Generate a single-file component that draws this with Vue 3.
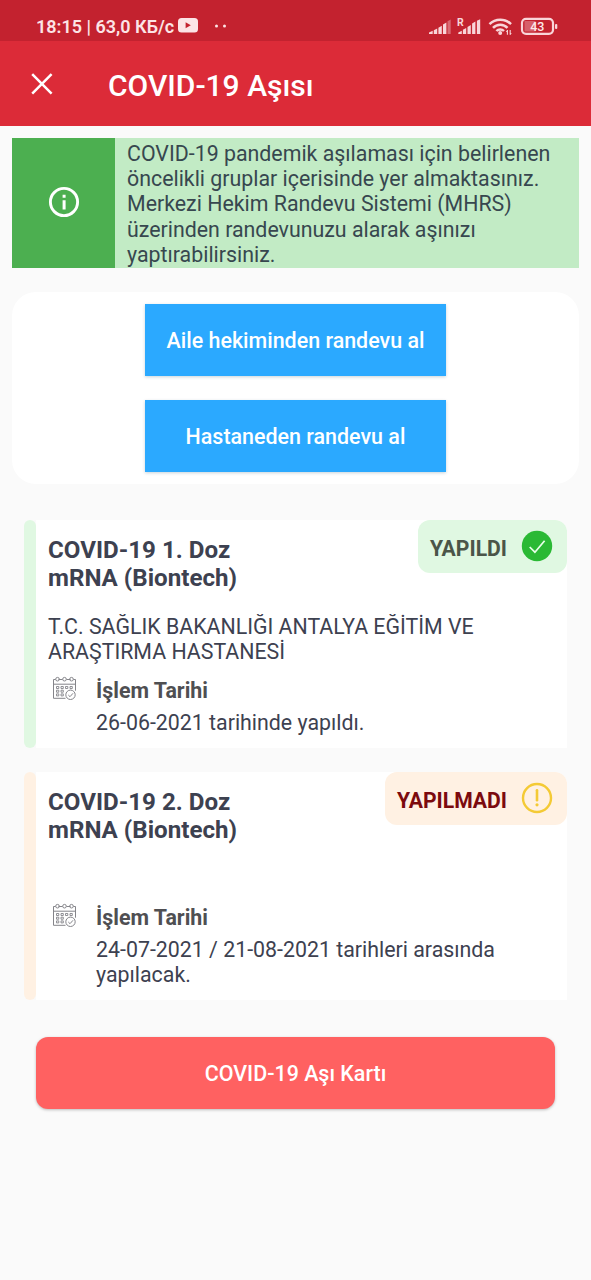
<script setup>
const doses = [
  {
    id: 1, state: 'done', title: ['COVID-19 1. Doz', 'mRNA (Biontech)'], badge: 'YAPILDI',
    place: ['T.C. SAĞLIK BAKANLIĞI ANTALYA EĞİTİM VE', 'ARAŞTIRMA HASTANESİ'],
    when: ['26-06-2021 tarihinde yapıldı.'],
  },
  {
    id: 2, state: 'pending', title: ['COVID-19 2. Doz', 'mRNA (Biontech)'], badge: 'YAPILMADI',
    place: [], when: ['24-07-2021 / 21-08-2021 tarihleri arasında', 'yapılacak.'],
  },
]
const info = [
  'COVID-19 pandemik aşılaması için belirlenen',
  'öncelikli gruplar içerisinde yer almaktasınız.',
  'Merkezi Hekim Randevu Sistemi (MHRS)',
  'üzerinden randevunuzu alarak aşınızı',
  'yaptırabilirsiniz.',
]
</script>

<template>
  <div class="screen">
    <div class="status">
      <span class="clock">18:15 | 63,0 КБ/с</span>
      <svg class="yt" width="20" height="15" viewBox="0 0 20 15"><rect width="20" height="14.5" rx="3.5" fill="#fce4e6" /><path d="M7.6 4.2v6l5.2-3z" fill="#c3222f" /></svg>
      <svg class="dots" width="14" height="4" viewBox="0 0 14 4" fill="#fce4e6"><circle cx="2.5" cy="2" r="1.5" /><circle cx="10.5" cy="2" r="1.5" /></svg>
      <svg class="signals" width="131" height="22" viewBox="0 0 131 22" fill="#f9d5d9">
        <path d="M1 16.5l3.7-1.7v3.2H1zM5.8 14.2l3.4-1.7V18H5.8zM10.4 11.8l3.4-2V18h-3.4zM15 8.6l3.4-2V18H15z" />
        <path d="M19.5 5.2l3.2-1.6V18h-3.2z" opacity=".4" />
        <path d="M30.3 16.5l3.5-1.7v3.2h-3.5zM34.9 13.7l3.3-1.7v6h-3.3zM39.5 11l3.3-2v9h-3.3zM44.1 7.4l3.3-2V18h-3.3zM48.9 4.8l3.3-1.6V18h-3.3z" />
        <text x="29" y="9.5" class="roaming">R</text>
        <g fill="none" stroke="#f9d5d9" stroke-width="2.5"><path d="M61.5 8.2a15 15 0 0 1 21.5 0M65 11.9a10 10 0 0 1 14.5 0M68.4 15a5.3 5.3 0 0 1 7.6 0" /></g>
        <circle cx="72.2" cy="17" r="2" />
        <path d="M79.4 14v4.8M82.2 14v4.8" stroke="#f9d5d9" stroke-width="1.1" /><path d="M77.8 16l1.6-2v2zM83.8 17l-1.6 2v-2z" />
        <rect x="96.5" y="5" width="11" height="10.5" opacity=".35" />
        <rect x="94" y="2.8" width="31" height="15" rx="4" fill="none" stroke="#f9d5d9" stroke-width="2.2" />
        <rect x="127" y="8" width="2.3" height="5" rx="1" />
        <text x="109.3" y="15" text-anchor="middle" class="charge">43</text>
      </svg>
    </div>
    <header class="bar">
      <svg width="22" height="22" viewBox="0 0 22 22" fill="none" stroke="#fff" stroke-width="2.5"><path d="M1.2 1.2l19.4 19.4M20.6 1.2L1.2 20.6" /></svg>
      <h1>COVID-19 Aşısı</h1>
    </header>
    <main>
      <section class="info">
        <div class="info-icon">
          <svg width="32" height="32" viewBox="0 0 32 32"><circle cx="16" cy="16" r="13.6" fill="none" stroke="#fff" stroke-width="2.9" /><path d="M14.6 14.2h3v9.3h-3zM14.6 8.8h3v3h-3z" fill="#fff" /></svg>
        </div>
        <p class="body info-text"><span v-for="l in info" :key="l">{{ l }}</span></p>
      </section>
      <section class="booking">
        <button class="blue">Aile hekiminden randevu al</button>
        <button class="blue">Hastaneden randevu al</button>
      </section>
      <article v-for="d in doses" :key="d.id" class="dose" :class="d.state">
        <div class="stripe"></div>
        <div class="content">
          <div class="top">
            <h2><span v-for="l in d.title" :key="l">{{ l }}</span></h2>
            <div class="badge">
              <span>{{ d.badge }}</span>
              <svg v-if="d.state === 'done'" width="32" height="32" viewBox="0 0 32 32"><circle cx="16" cy="16" r="15.2" fill="#2ab934" /><path d="M8.7 17l5.2 5.2 9.7-11.5" fill="none" stroke="#e8ffe9" stroke-width="1.7" /></svg>
              <svg v-else width="32" height="32" viewBox="0 0 32 32" fill="none" stroke="#f4ca35"><circle cx="16" cy="16" r="14" stroke-width="2.4" /><path d="M16 8.2v10" stroke-width="2.6" stroke-linecap="round" /><circle cx="16" cy="22.8" r="1.6" fill="#f4ca35" stroke="none" /></svg>
            </div>
          </div>
          <p class="body place"><span v-for="l in d.place" :key="l">{{ l }}</span></p>
          <div class="date">
            <svg width="25" height="25" viewBox="0 0 25 25" fill="none" stroke="#85858a" stroke-width="1">
              <path d="M3.5 3.5H1.5v18.8h12M21.5 3.5h2v11.2M1.5 8.2h22M6.5 3.5h4M14.5 3.5h4" />
              <circle cx="5.5" cy="3.2" r="1.8" /><circle cx="12.5" cy="3.2" r="1.8" /><circle cx="19.5" cy="3.2" r="1.8" />
              <path d="M4.5 10.5h2.3v2H4.5zM9 10.5h2.3v2H9zM13.5 10.5h2.3v2h-2.3zM18 10.5h2.3v2H18zM4.5 14.2h2.3v2H4.5zM9 14.2h2.3v2H9zM4.5 17.9h2.3v2H4.5zM9 17.9h2.3v2H9z" stroke-width=".9" />
              <circle cx="18.5" cy="18.8" r="4.7" fill="#fff" /><path d="M16.3 19l1.7 1.7 3-3.4" />
            </svg>
            <div>
              <h3>İşlem Tarihi</h3>
              <p class="body"><span v-for="l in d.when" :key="l">{{ l }}</span></p>
            </div>
          </div>
        </div>
      </article>
      <button class="card-btn">COVID-19 Aşı Kartı</button>
    </main>
  </div>
</template>

<style>
body { margin: 0; background: #fafafa; }
</style>

<style scoped>
.screen { width: 591px; height: 1280px; overflow: hidden; background: #fafafa; font-family: Roboto, "Liberation Sans", sans-serif; color: #3d4150; }
h1, h2, h3, p { margin: 0; }
p span, h2 span { display: block; white-space: nowrap; }
button { border: 0; padding: 1px 0 0; font-family: inherit; color: #fff; font-weight: 500; font-size: 21.45px; white-space: nowrap; }
.status { height: 41px; box-sizing: border-box; padding: 6px 32px 0 36px; background: #c3222f; display: flex; align-items: center; color: #fce4e6; }
.clock { font-size: 18px; font-weight: 600; white-space: nowrap; width: 142px; padding-top: 6px; }
.yt { margin-top: 4px; }
.dots { margin-left: 16px; margin-top: 4px; }
.signals { margin-left: auto; margin-top: 7px; }
.roaming { font-size: 10.5px; font-weight: 700; }
.charge { font-size: 12.5px; font-weight: 500; fill: #fde9eb; }
.bar { height: 85px; background: #dc2b38; display: flex; align-items: center; padding-left: 31px; gap: 55px; }
h1 { color: #fff; font-size: 30px; font-weight: 500; line-height: 34px; padding-top: 4px; white-space: nowrap; }
main { padding: 12px; display: flex; flex-direction: column; }
.info { height: 129.5px; display: flex; background: #c2ebc5; }
.info-icon { width: 103px; background: #4caf50; display: flex; align-items: center; justify-content: center; }
.info-icon svg { margin-top: -1px; }
.body { font-size: 21.35px; line-height: 25.2px; }
.info-text { padding: 3px 0 0 12px; color: #37474f; }
.booking { height: 192px; box-sizing: border-box; margin-top: 24px; padding-top: 12px; border-radius: 24px; background: #fff; display: flex; flex-direction: column; align-items: center; gap: 24px; }
.blue { width: 301px; height: 72.2px; background: #2ba9ff; box-shadow: 0 1px 3px rgba(0, 60, 90, .22); }
.dose { height: 228px; margin: 24px 12px 0; display: flex; }
.booking + .dose { margin-top: 36px; }
.stripe { width: 12px; border-radius: 6px; background: #e0f8e2; }
.content { flex: 1; background: #fff; border-radius: 0 12px 0 0; }
.top { display: flex; justify-content: space-between; height: 94px; padding-left: 12px; }
h2 { padding-top: 16px; font-size: 24.15px; line-height: 28.6px; font-weight: 700; }
.badge { height: 53px; box-sizing: border-box; padding: 0 14px 0 12px; border-radius: 12px; background: #e0f8e2; display: flex; align-items: center; gap: 14px; font-size: 21.15px; font-weight: 700; color: #4b5548; }
.badge span { padding-top: 4px; }
.place { height: 60px; padding-left: 12px; }
.date { display: flex; padding-left: 16px; gap: 19px; }
.date svg { margin-top: 2px; }
h3 { font-size: 21.4px; line-height: 25px; font-weight: 700; color: #4f4f52; padding-top: 4px; margin-bottom: 7.5px; }
.pending .stripe { background: #fff1e3; }
.pending .badge { background: #fff1e3; color: #7c0a0e; }
.pending .top { height: 56px; }
.pending .place { height: 73px; }
.card-btn { height: 72px; margin: 37px 24px 0; background: #ff6161; border-radius: 12px; box-shadow: 0 1px 3px rgba(0, 0, 0, .25); }
</style>
